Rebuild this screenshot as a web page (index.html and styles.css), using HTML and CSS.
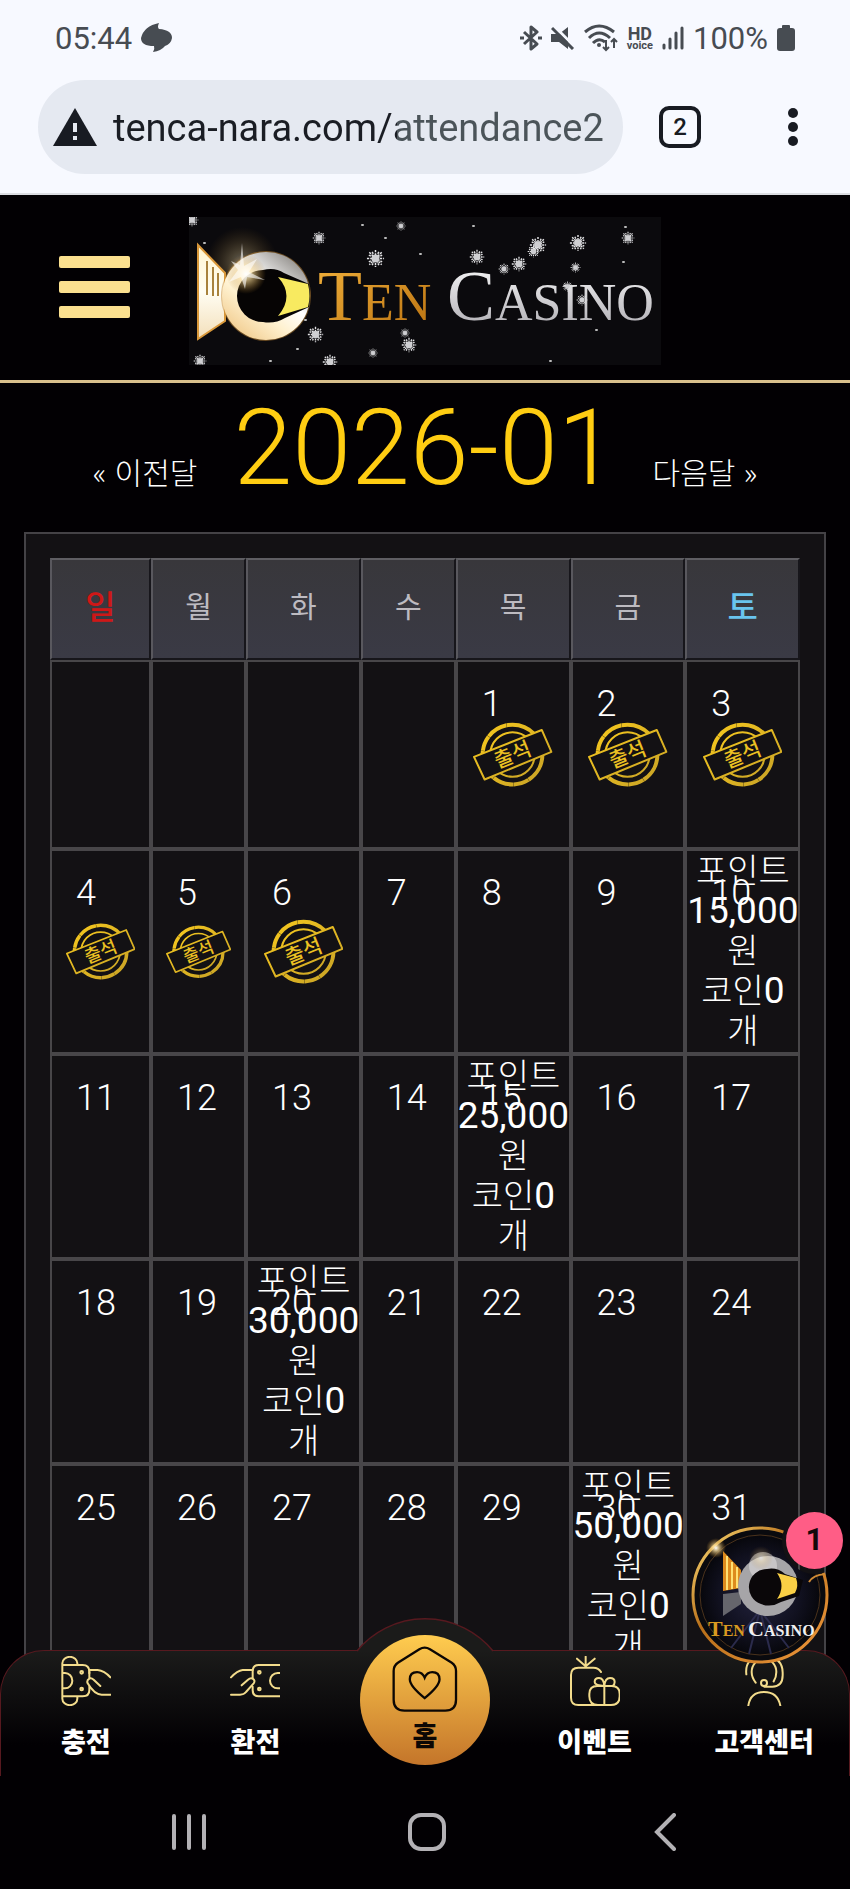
FILE: index.html
```html
<!DOCTYPE html>
<html lang="ko">
<head>
  <meta charset="UTF-8">
  <meta name="viewport" content="width=device-width, initial-scale=1">
  <title>TEN CASINO</title>
  <link rel="stylesheet" href="styles.css">
</head>
<body>
  <!-- shared shapes -->
  <svg class="defs" width="0" height="0" aria-hidden="true">
    <defs>
      <linearGradient id="tail" x1="0" y1="0" x2="0" y2="1">
        <stop offset="0" stop-color="#fff6cf"/>
        <stop offset="0.5" stop-color="#fffdf2"/>
        <stop offset="1" stop-color="#f3dfba"/>
      </linearGradient>
      <linearGradient id="disc" x1="0.2" y1="1" x2="0.9" y2="0.1">
        <stop offset="0" stop-color="#f0c98a"/>
        <stop offset="0.35" stop-color="#fff1cf"/>
        <stop offset="0.6" stop-color="#ffffff"/>
        <stop offset="1" stop-color="#8d8a86"/>
      </linearGradient>
      <radialGradient id="glow">
        <stop offset="0" stop-color="#ffffff"/>
        <stop offset="0.3" stop-color="#ffe3a0" stop-opacity="0.75"/>
        <stop offset="1" stop-color="#b07a20" stop-opacity="0"/>
      </radialGradient>
      <linearGradient id="gold" x1="0" y1="0" x2="1" y2="1">
        <stop offset="0" stop-color="#f2b23c"/>
        <stop offset="1" stop-color="#b8700f"/>
      </linearGradient>
      <linearGradient id="silver" x1="0" y1="0" x2="0" y2="1">
        <stop offset="0" stop-color="#ffffff"/>
        <stop offset="1" stop-color="#a9a7ad"/>
      </linearGradient>
      <linearGradient id="ring" x1="0" y1="0" x2="1" y2="1">
        <stop offset="0" stop-color="#ffe27a"/>
        <stop offset="0.4" stop-color="#b86f1a"/>
        <stop offset="1" stop-color="#f0983c"/>
      </linearGradient>
      <radialGradient id="night">
        <stop offset="0" stop-color="#23233f"/>
        <stop offset="0.7" stop-color="#10101e"/>
        <stop offset="1" stop-color="#07070c"/>
      </radialGradient>
      <linearGradient id="stampGold" x1="0" y1="0" x2="1" y2="1">
        <stop offset="0" stop-color="#f6c81e"/>
        <stop offset="1" stop-color="#c9a326"/>
      </linearGradient>
      <symbol id="flake" viewBox="-10 -10 20 20">
        <g stroke="#e4e4e6" stroke-width="1.6" stroke-dasharray="2.4 1">
          <path d="M-9 0H9M0-9V9M-6.500-6.500L6.500 6.500M6.500-6.500L-6.500 6.500"/>
          <path d="M-7-3.500L7 3.500M-7 3.500L7-3.500M-3.500-7L3.500 7M3.500-7L-3.500 7"/>
        </g>
        <circle r="4" fill="#cfcfd2"/>
      </symbol>
      <symbol id="stamp" viewBox="0 0 240 196">
        <g fill="none" stroke="url(#stampGold)">
          <circle cx="119" cy="98" r="90" stroke-width="12" stroke-dasharray="90 1 46 1 64 1"/>
          <circle cx="119" cy="98" r="67" stroke-width="6"/>
          <path d="M3 105L207 24L236 90L35 173Z" fill="#131114" stroke-width="6" stroke-linejoin="round"/>
        </g>
        <text class="stamp-text" x="119" y="120" text-anchor="middle" transform="rotate(-22 119 98)">출석</text>
      </symbol>
    </defs>
  </svg>

  <div class="browser">
    <div class="status">
      <span>05:44</span>
      <svg class="chat-dot" width="32" height="30" viewBox="0 0 32 30"><path fill="#474c52" d="M18 0Q16 4 18 6Q31 7 31 15Q30 21 24 23Q20 28 12 29Q14 26 13 23Q0 23 0 15Q3 3 18 0Z"/></svg>
      <div class="status-right">
        <svg width="22" height="26" viewBox="0 0 22 26" fill="none" stroke="#474c52" stroke-width="3"><path d="M4 7L17 19L11 24V2L17 7L4 19" stroke-linejoin="round"/><path d="M0 13H4M18 13H22"/></svg>
        <svg width="24" height="24" viewBox="0 0 24 24"><path fill="#474c52" d="M0 8H8L17 1V23L8 16H0Z"/><path d="M4 1L25 22" stroke="#f7f9ff" stroke-width="3"/><path d="M1 2L22 23" stroke="#474c52" stroke-width="3"/></svg>
        <svg width="34" height="28" viewBox="0 0 34 28" fill="none" stroke="#474c52" stroke-width="3"><path d="M1 8Q15-4 30 8M5 14Q15 4 26 14M9 19Q15 13 21 18"/><circle cx="15" cy="21" r="2" fill="#474c52" stroke="none"/><path d="M22 16V26M19 23L22 26L25 23M30 24V15M27 18L30 15L33 18" stroke-width="2"/></svg>
        <span class="hd"><b>HD</b><small>voice</small></span>
        <svg width="22" height="24" viewBox="0 0 22 24" stroke="#474c52" stroke-width="3" stroke-linecap="round"><path d="M2 19V22M8 13V22M14 7V22M20 2V22"/></svg>
        <span>100%</span>
        <svg width="18" height="26" viewBox="0 0 18 26" fill="#474c52"><rect x="5" y="0" width="8" height="5" rx="1"/><rect x="0" y="3" width="18" height="23" rx="3"/></svg>
      </div>
    </div>
    <div class="toolbar">
      <label class="url">
        <svg width="44" height="38" viewBox="0 0 44 38"><path fill="#181b22" d="M22 0L44 38H0Z"/><path stroke="#e5e9f1" stroke-width="4" d="M22 15V24M22 28V32"/></svg>
        <input type="text" aria-label="주소" value="tenca-nara.com/attendance2">
      </label>
      <button class="tabs" type="button">2</button>
      <button class="more" type="button" aria-label="메뉴"><svg width="12" height="40" viewBox="0 0 12 40" fill="#181b22"><circle cx="6" cy="6" r="5"/><circle cx="6" cy="20" r="5"/><circle cx="6" cy="34" r="5"/></svg></button>
    </div>
  </div>

  <div class="site">
    <header class="site-header">
      <button class="hamburger" type="button" aria-label="전체 메뉴"><i></i><i></i><i></i></button>
      <a class="logo" href="#">
        <svg width="472" height="148" viewBox="0 0 472 148">
          <rect width="472" height="148" fill="#0b0a0d"/>
          <circle cx="53" cy="46" r="36" fill="url(#glow)" opacity="0.35"/>
          <path d="M9 28L36 56V104L9 122Z" fill="url(#tail)" stroke="#d9983a" stroke-width="2"/>
          <path d="M18 44V78M24 50V79M29 56V79" stroke="#a8823c" stroke-width="2"/>
          <circle cx="77" cy="79" r="45" fill="#c58a35" opacity="0.5"/>
          <circle cx="77" cy="79" r="44" fill="url(#disc)"/>
          <path d="M74 53Q86 50 95 56L120 67Q122 79 120 90L96 101Q86 107 74 105A26 26 0 0 1 74 53Z" fill="#060404"/>
          <path d="M89 60L119 67Q122 79 119 90L89 99Q106 79 89 60Z" fill="#f8ea60"/>
          <circle cx="57" cy="57" r="20" fill="url(#glow)" opacity="0.9"/>
          <path d="M53 26L55 49L68 42L60 55L76 63L58 60L56 72L52 60L40 65L49 53L42 44L51 48Z" fill="#fff" opacity="0.6"/>
          <g class="logo-text">
            <text x="129" y="103" fill="url(#gold)"><tspan class="cap">T</tspan>EN</text>
            <text x="258" y="103" fill="url(#silver)"><tspan class="cap">C</tspan>ASINO</text>
          </g>
          <g>
            <use href="#flake" x="-4" y="-4" width="14" height="14"/>
            <use href="#flake" x="123" y="14" width="14" height="14"/>
            <use href="#flake" x="207" y="4" width="10" height="10"/>
            <use href="#flake" x="177" y="32" width="19" height="19"/>
            <use href="#flake" x="280" y="32" width="16" height="16"/>
            <use href="#flake" x="309" y="46" width="12" height="12"/>
            <use href="#flake" x="322" y="39" width="16" height="16"/>
            <use href="#flake" x="340" y="19" width="18" height="18"/>
            <use href="#flake" x="338" y="28" width="13" height="13"/>
            <use href="#flake" x="380" y="17" width="18" height="18"/>
            <use href="#flake" x="432" y="14" width="14" height="14"/>
            <use href="#flake" x="381" y="45" width="11" height="11"/>
            <use href="#flake" x="373" y="64" width="11" height="11"/>
            <use href="#flake" x="387" y="77" width="12" height="12"/>
            <use href="#flake" x="118" y="109" width="17" height="17"/>
            <use href="#flake" x="211" y="111" width="10" height="10"/>
            <use href="#flake" x="212" y="120" width="16" height="16"/>
            <use href="#flake" x="179" y="131" width="10" height="10"/>
            <use href="#flake" x="133" y="137" width="16" height="16"/>
            <use href="#flake" x="4" y="137" width="14" height="14"/>
          </g>
          <path d="M173 8h1M196 21h1M231 37h1M284 9h1M434 45h1M407 113h1M361 144h1M108 132h1M81 144h1M116 103h1M15 26h1M436 10h1" stroke="#bbb" stroke-width="2" stroke-linecap="round"/>
        </svg>
      </a>
    </header>

    <main>
      <div class="month">
        <a href="#">« 이전달</a>
        <h1>2026-01</h1>
        <a href="#">다음달 »</a>
      </div>

      <div class="panel">
        <table class="calendar">
          <colgroup>
            <col class="c-sun"><col class="c-narrow"><col><col class="c-narrow"><col><col><col>
          </colgroup>
          <thead>
            <tr><th class="sun">일</th><th>월</th><th>화</th><th>수</th><th>목</th><th>금</th><th class="sat">토</th></tr>
          </thead>
          <tbody>
            <tr>
              <td></td><td></td><td></td><td></td>
              <td><div class="cell"><span class="day">1</span><svg class="stamp" viewBox="0 0 240 196"><use href="#stamp"/></svg></div></td>
              <td><div class="cell"><span class="day">2</span><svg class="stamp" viewBox="0 0 240 196"><use href="#stamp"/></svg></div></td>
              <td><div class="cell"><span class="day">3</span><svg class="stamp" viewBox="0 0 240 196"><use href="#stamp"/></svg></div></td>
            </tr>
            <tr>
              <td><div class="cell"><span class="day">4</span><svg class="stamp" viewBox="0 0 240 196"><use href="#stamp"/></svg></div></td>
              <td><div class="cell"><span class="day">5</span><svg class="stamp" viewBox="0 0 240 196"><use href="#stamp"/></svg></div></td>
              <td><div class="cell"><span class="day">6</span><svg class="stamp" viewBox="0 0 240 196"><use href="#stamp"/></svg></div></td>
              <td><div class="cell"><span class="day">7</span></div></td>
              <td><div class="cell"><span class="day">8</span></div></td>
              <td><div class="cell"><span class="day">9</span></div></td>
              <td><div class="cell"><span class="day">10</span><p class="reward">포인트<br><b>15,000</b><br>원<br>코인<b>0</b><br>개</p></div></td>
            </tr>
            <tr>
              <td><div class="cell"><span class="day">11</span></div></td>
              <td><div class="cell"><span class="day">12</span></div></td>
              <td><div class="cell"><span class="day">13</span></div></td>
              <td><div class="cell"><span class="day">14</span></div></td>
              <td><div class="cell"><span class="day">15</span><p class="reward">포인트<br><b>25,000</b><br>원<br>코인<b>0</b><br>개</p></div></td>
              <td><div class="cell"><span class="day">16</span></div></td>
              <td><div class="cell"><span class="day">17</span></div></td>
            </tr>
            <tr>
              <td><div class="cell"><span class="day">18</span></div></td>
              <td><div class="cell"><span class="day">19</span></div></td>
              <td><div class="cell"><span class="day">20</span><p class="reward">포인트<br><b>30,000</b><br>원<br>코인<b>0</b><br>개</p></div></td>
              <td><div class="cell"><span class="day">21</span></div></td>
              <td><div class="cell"><span class="day">22</span></div></td>
              <td><div class="cell"><span class="day">23</span></div></td>
              <td><div class="cell"><span class="day">24</span></div></td>
            </tr>
            <tr>
              <td><div class="cell"><span class="day">25</span></div></td>
              <td><div class="cell"><span class="day">26</span></div></td>
              <td><div class="cell"><span class="day">27</span></div></td>
              <td><div class="cell"><span class="day">28</span></div></td>
              <td><div class="cell"><span class="day">29</span></div></td>
              <td><div class="cell"><span class="day">30</span><p class="reward">포인트<br><b>50,000</b><br>원<br>코인<b>0</b><br>개</p></div></td>
              <td><div class="cell"><span class="day">31</span></div></td>
            </tr>
          </tbody>
        </table>
      </div>
    </main>

    <nav class="tabbar">
      <svg class="bump" width="138" height="34" viewBox="0 0 138 34"><path d="M0 34L1 33A88 88 0 0 1 137 33L138 34Z" fill="#1b1b1a"/><path d="M1 33A88 88 0 0 1 137 33" fill="none" stroke="#57191f" stroke-width="1.500"/></svg>
      <a href="#">
        <svg class="icon" viewBox="0 0 150 150"><path d="M4 22V128M4 22a22 19 0 0 1 45 0V27M49 121V128a22 19 0 0 1-45 0M4 27H65q20 0 20 20V52M85 92V103q0 18-20 18H4M4 51H12a22 23 0 0 1 0 46H4"/><path d="M85 42H110Q130 44 148 64M118 90L98 71Q90 64 85 68Q76 74 80 82Q100 116 122 116H148M85 47V66"/><circle cx="62" cy="49" r="4"/><circle cx="62" cy="99" r="4"/></svg>
        <span>충전</span>
      </a>
      <a href="#">
        <svg class="icon" viewBox="0 0 150 150"><path d="M149 27H86q-18 0-18 20V66M68 92V103q0 18 18 18H149M149 51h-6a23 23 0 0 0 0 46h6"/><path d="M68 42H38Q22 44 3 64M35 88L54 71Q62 64 68 68Q77 74 71 82L48 108Q42 116 30 116H3"/><circle cx="88" cy="49" r="4"/><circle cx="88" cy="99" r="4"/></svg>
        <span>환전</span>
      </a>
      <a class="home" href="#">
        <svg class="home-icon" viewBox="0 0 200 200"><path d="M99 5q8 0 16 5L180 50q14 9 14 26V163q0 33-33 33H38q-33 0-33-33V76q0-17 14-26L83 10q8-5 16-5Z"/><path d="M99 158Q54 122 54 101q0-22 22-22q16 0 23 17q7-17 23-17q22 0 22 22Q144 122 99 158Z"/></svg>
        <span>홈</span>
      </a>
      <a href="#">
        <svg class="icon" viewBox="0 0 150 150"><path d="M47 31V2M46 30L21 8M48 30L74 8M93 48Q86 35 70 35H25Q3 35 3 57V125Q3 147 25 147H123Q149 147 149 121V114Q149 90 125 90H82Q58 90 58 114V121Q58 147 84 147M103 90V147"/><path d="M103 90Q74 88 74 78Q74 66 87 66Q101 66 103 90Q105 66 120 66Q134 66 134 78Q134 86 128 90"/></svg>
        <span>이벤트</span>
      </a>
      <a href="#">
        <svg class="icon" viewBox="0 0 150 150"><path d="M50 80Q38 64 38 48A37 40 0 0 1 112 48Q112 64 104 76M22 55Q16 2 75 2Q131 2 131 50V58Q131 92 100 92H76M28 149Q34 108 75 108Q116 108 124 149"/><circle cx="75" cy="81" r="9"/></svg>
        <span>고객센터</span>
      </a>
    </nav>

    <button class="chat" type="button" aria-label="상담">
      <svg width="138" height="138" viewBox="0 0 138 138">
        <mask id="cut"><rect width="138" height="138" fill="#fff"/><circle cx="124" cy="15" r="33" fill="#000"/></mask>
        <g mask="url(#cut)">
          <circle cx="69" cy="69" r="67" fill="#0a0a0e" stroke="url(#ring)" stroke-width="3"/>
          <circle cx="69" cy="69" r="60" fill="url(#night)" stroke="#4a321c" stroke-width="1"/>
          <path d="M69 84L40 122M69 84L58 128M69 84L80 128M69 84L98 122" stroke="#2b2b4c" stroke-width="2"/>
          <path d="M32 25L50 44V62L32 65Z" fill="#dd8a1d"/>
          <path d="M36 30V64M41 36V63M46 41V62" stroke="#ffe072" stroke-width="2"/>
          <path d="M32 68L50 66V78L32 90Z" fill="#66666c"/>
          <circle cx="77" cy="60" r="30" fill="#a6a5a8"/>
          <circle cx="72" cy="40" r="14" fill="#e8e6e6" opacity="0.5"/>
          <path d="M76 43Q86 41 94 48L112 54L108 70L90 76Q80 82 70 78A18 18 0 0 1 76 43Z" fill="#0a0709"/>
          <path d="M86 47L105 52Q108 60 104 67L86 73Q95 60 86 47Z" fill="#f9cf45"/>
          <path d="M118 56Q122 49 134 48" fill="none" stroke="#d08a35" stroke-width="2"/>
        </g>
        <circle cx="25" cy="22" r="10" fill="url(#glow)"/>
        <circle cx="70" cy="32" r="12" fill="url(#glow)" opacity="0.4"/>
        <g class="chat-text">
          <text x="17" y="110" fill="#d99a20"><tspan class="cap">T</tspan>EN</text>
          <text x="57" y="110" fill="#f0f0f2"><tspan class="cap">C</tspan>ASINO</text>
        </g>
      </svg>
      <span class="badge">1</span>
    </button>
  </div>

  <div class="sysnav">
    <button type="button" aria-label="최근 앱"><svg width="34" height="38" viewBox="0 0 34 38"><path d="M2 3V35M17 3V35M32 3V35"/></svg></button>
    <button type="button" aria-label="홈 화면"><svg width="38" height="38" viewBox="0 0 38 38"><rect x="2" y="2" width="34" height="34" rx="11"/></svg></button>
    <button type="button" aria-label="뒤로"><svg width="22" height="38" viewBox="0 0 22 38"><path d="M20 2L3 19L20 36"/></svg></button>
  </div>
</body>
</html>
```

FILE: styles.css
```css
* {
  box-sizing: border-box;
}

body {
  margin: 0;
  height: 100vh;
  display: flex;
  flex-direction: column;
  background: #020003;
  color: white;
  font-family: Roboto, "Noto Sans CJK KR", sans-serif;
}

a {
  color: inherit;
  text-decoration: none;
}

button {
  border: none;
  padding: 0;
  background: none;
  font-family: inherit;
  cursor: pointer;
}

svg {
  display: block;
}

.defs {
  position: absolute;
}

/* browser chrome */
.browser {
  background: #f7f9ff;
  border-bottom: 2px solid #dcdee3;
}

.status {
  display: flex;
  align-items: center;
  height: 80px;
  padding: 0 55px 4px;
  color: #474c52;
  font-size: 31px;
}

.chat-dot {
  margin-left: 9px;
}

.status-right {
  display: flex;
  align-items: center;
  gap: 9px;
  margin-left: auto;
}

.hd {
  display: flex;
  flex-direction: column;
  align-items: center;
}

.hd b {
  font-size: 18px;
  line-height: 14px;
}

.hd small {
  font-size: 11px;
  font-weight: bold;
  line-height: 9px;
}

.toolbar {
  display: flex;
  align-items: center;
  padding: 0 51px 19px 38px;
}

.url {
  flex: 1;
  display: flex;
  align-items: center;
  gap: 16px;
  height: 94px;
  padding: 0 18px 0 15px;
  border-radius: 47px;
  background: #e5e9f1;
}

.url input {
  flex: 1;
  min-width: 0;
  padding: 2px 0 0;
  border: none;
  outline: none;
  font-family: Roboto, sans-serif;
  font-size: 38px;
  line-height: 48px;
  color: transparent;
  background: linear-gradient(90deg, #1a1d24 284px, #4b5459 284px);
  background-clip: text;
  -webkit-background-clip: text;
}

.tabs {
  width: 42px;
  height: 42px;
  margin: 0 86px 0 36px;
  border: 4px solid #181b22;
  border-radius: 10px;
  color: #181b22;
  font-size: 24px;
  font-weight: 500;
}

/* page */
.site {
  position: relative;
  flex: 1;
  min-height: 0;
  overflow: hidden;
}

.site-header {
  display: grid;
  grid-template-columns: 1fr auto 1fr;
  align-items: center;
  padding: 22px 0 15px;
  border-bottom: 3px solid #d9c08c;
}

.hamburger {
  display: flex;
  flex-direction: column;
  gap: 13px;
  width: 71px;
  margin: 0 0 8px 59px;
}

.hamburger i {
  height: 12px;
  border-radius: 2px;
  background: #fbe08f;
}

.logo-text {
  font-family: "Liberation Serif", serif;
  font-size: 52px;
}

.logo-text .cap {
  font-size: 72px;
}

.month {
  display: flex;
  justify-content: center;
  align-items: baseline;
  gap: 36px;
  padding: 12px 0 31px;
  font-size: 30px;
  font-weight: 300;
}

.month a {
  font-family: "Noto Sans CJK KR", sans-serif;
}

.month h1 {
  margin: 0;
  color: #ffcd12;
  font-size: 106px;
  font-weight: 300;
  line-height: 106px;
}

.panel {
  margin: 0 24px;
  padding: 24px;
  border: 2px solid #444246;
  background: #131114;
}

.calendar {
  width: 100%;
  table-layout: fixed;
  border-collapse: separate;
  border-spacing: 0;
}

.c-sun {
  width: 101px;
}

.c-narrow {
  width: 95px;
}

.calendar th {
  height: 102px;
  padding: 0 0 8px;
  border: 2px solid;
  border-color: #5f5e63 #17161b #17161b #59585e;
  background: linear-gradient(#38373b, #3a3a45);
  color: #bdbbc1;
  font-size: 29px;
  font-weight: 400;
}

.calendar .sun {
  color: #cf1717;
  font-size: 33px;
  font-weight: 500;
}

.calendar .sat {
  color: #69c4ee;
  font-size: 33px;
  font-weight: 500;
}

.calendar td {
  padding: 0;
  border: 2px solid #484649;
}

/* day number and its stamp or reward share one grid area */
.cell {
  display: grid;
  min-height: 185px;
  font-weight: 300;
}

.calendar tr + tr .cell {
  min-height: 201px;
}

.cell > * {
  grid-area: 1 / 1;
}

.day {
  padding: 21px 0 0 24px;
  font-size: 36px;
  line-height: 42px;
}

.stamp {
  width: 72%;
  place-self: center;
}

.stamp-text {
  fill: #eac022;
  font-family: "Noto Sans CJK KR", sans-serif;
  font-size: 62px;
  font-weight: 500;
}

.reward {
  justify-self: center;
  margin: 0;
  font-size: 34px;
  line-height: 40px;
  text-align: center;
  white-space: nowrap;
}

.reward b {
  font-size: 37px;
  font-weight: 400;
  line-height: 36px;
}

/* bottom tabs */
.tabbar {
  position: absolute;
  left: 0;
  right: 0;
  bottom: 0;
  display: grid;
  grid-template-columns: repeat(5, 1fr);
  height: 126px;
  border: 1px solid #57191f;
  border-bottom: none;
  border-radius: 44px 44px 0 0;
  background: linear-gradient(#1b1b1a, #020003 75%);
}

.bump {
  position: absolute;
  left: 50%;
  top: -33px;
  margin-left: -69px;
}

.tabbar a {
  display: flex;
  flex-direction: column;
  align-items: center;
  gap: 15px;
  padding-top: 5px;
  font-family: "Noto Sans CJK KR", sans-serif;
  font-size: 27px;
  font-weight: 900;
  line-height: 40px;
}

.icon {
  width: 50px;
  height: 50px;
  fill: none;
  stroke: #f3dc8c;
  stroke-width: 6;
  stroke-linecap: round;
  stroke-linejoin: round;
}

.tabbar .home {
  position: relative;
  justify-self: center;
  width: 130px;
  height: 130px;
  margin-top: -16px;
  padding-top: 11px;
  gap: 3px;
  border-radius: 50%;
  background: linear-gradient(#ffcc4f, #c4752a);
  color: #0c0704;
}

.home-icon {
  width: 66px;
  height: 66px;
  fill: none;
  stroke: #0c0704;
  stroke-width: 7;
}

.chat {
  position: absolute;
  right: 21px;
  bottom: 112px;
}

.chat-text {
  font-family: "Liberation Serif", serif;
  font-size: 16px;
  font-weight: bold;
}

.chat-text .cap {
  font-size: 22px;
}

.badge {
  position: absolute;
  top: -14px;
  right: -14px;
  width: 57px;
  height: 57px;
  border-radius: 50%;
  background: #ff5d86;
  color: #14080c;
  font-size: 31px;
  font-weight: bold;
  line-height: 55px;
  text-align: center;
}

/* system buttons */
.sysnav {
  display: grid;
  grid-template-columns: repeat(3, 1fr);
  align-items: center;
  justify-items: center;
  height: 113px;
  padding: 0 66px 2px 70px;
}

.sysnav svg {
  fill: none;
  stroke: #b3b1b5;
  stroke-width: 4;
  stroke-linecap: round;
}
```
